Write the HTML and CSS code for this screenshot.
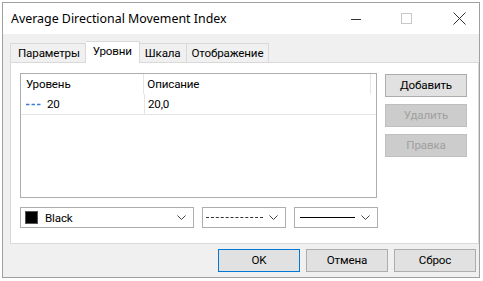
FILE: index.html
```html
<!DOCTYPE html>
<html>
<head>
<meta charset="utf-8">
<link rel="stylesheet" href="styles.css">
</head>
<body>
<div class="window">
  <div class="titlebar">
    <span class="title">Average Directional Movement Index</span>
    <div class="caption-btns">
      <svg class="cap cap-min" width="12" height="12" viewBox="0 0 12 12"><path d="M1 6.5H11" stroke="#333" stroke-width="1"/></svg>
      <svg class="cap cap-max" width="12" height="12" viewBox="0 0 12 12"><rect x="0.5" y="0.5" width="10" height="10" fill="none" stroke="#c8c8c8" stroke-width="1"/></svg>
      <svg class="cap cap-close" width="13" height="13" viewBox="0 0 13 13"><path d="M0.5 0.5L12.5 12.5M12.5 0.5L0.5 12.5" stroke="#333" stroke-width="1"/></svg>
    </div>
  </div>
  <div class="content">
    <div class="tabs">
      <div class="tab first">Параметры</div>
      <div class="tab active">Уровни</div>
      <div class="tab">Шкала</div>
      <div class="tab">Отображение</div>
    </div>
    <div class="panel">
      <div class="top-row">
        <div class="list">
          <div class="list-head">
            <div class="cell c1">Уровень</div>
            <div class="cell c2">Описание</div>
            <div class="cell c3"></div>
          </div>
          <div class="list-row">
            <div class="cell c1"><svg class="dash-ico" width="15" height="3" viewBox="0 0 15 3"><path d="M0 1.5H3.5M5.5 1.5H9M11 1.5H14.5" stroke="#3a7fd4" stroke-width="1.3"/></svg>20</div>
            <div class="cell c2">20,0</div>
          </div>
        </div>
        <div class="side-btns">
          <div class="btn">Добавить</div>
          <div class="btn disabled">Удалить</div>
          <div class="btn disabled">Правка</div>
        </div>
      </div>
      <div class="combo-row">
        <div class="combo color-combo">
          <span class="swatch"></span><span class="combo-text">Black</span>
          <svg class="chev" width="9" height="5" viewBox="0 0 9 5"><path d="M0.5 0.5L4.5 4.5L8.5 0.5" fill="none" stroke="#444" stroke-width="1"/></svg>
        </div>
        <div class="combo style-combo">
          <span class="line dashed"></span>
          <svg class="chev" width="9" height="5" viewBox="0 0 9 5"><path d="M0.5 0.5L4.5 4.5L8.5 0.5" fill="none" stroke="#444" stroke-width="1"/></svg>
        </div>
        <div class="combo style-combo">
          <span class="line solid"></span>
          <svg class="chev" width="9" height="5" viewBox="0 0 9 5"><path d="M0.5 0.5L4.5 4.5L8.5 0.5" fill="none" stroke="#444" stroke-width="1"/></svg>
        </div>
      </div>
    </div>
    <div class="bottom-btns">
      <div class="btn big default">OK</div>
      <div class="btn big">Отмена</div>
      <div class="btn big">Сброс</div>
    </div>
  </div>
</div>
</body>
</html>
```
FILE: styles.css
```css
html, body {
  margin: 0;
  padding: 0;
  background: #ffffff;
  width: 483px;
  height: 281px;
  overflow: hidden;
}
body {
  font-family: Roboto, "Noto Sans", sans-serif;
  font-size: 11.6px;
  letter-spacing: -0.15px;
  color: #000;
}
.window {
  margin: 2px 0 0 2px;
  width: 478px;
  height: 276px;
  border: 1px solid #a0a0a0;
  background: #f0f0f0;
  display: flex;
  flex-direction: column;
  box-sizing: border-box;
}
.titlebar {
  height: 31px;
  background: #fff;
  display: flex;
  align-items: center;
  padding-left: 8px;
  flex: none;
}
.title {
  font-family: "Noto Sans", sans-serif;
  font-size: 12.4px;
  letter-spacing: 0;
  color: #000;
  flex: 1;
}
.caption-btns {
  display: flex;
  align-items: center;
  height: 100%;
}
.cap { display: block; }
.cap-min { margin-right: 39px; }
.cap-max { margin-right: 40px; }
.cap-close { margin-right: 13px; }
.content {
  padding: 7px 0 0 7px;
  display: flex;
  flex-direction: column;
  flex: 1;
}
.tabs {
  display: flex;
  align-items: flex-end;
  height: 21px;
  position: relative;
  z-index: 1;
}
.tab {
  height: 19px;
  box-sizing: border-box;
  border: 1px solid #d9d9d9;
  border-bottom: none;
  border-left: none;
  background: #f0f0f0;
  padding: 0 5px;
  line-height: 18px;
}
.tab.first { border-left: 1px solid #d9d9d9; padding-left: 7px; }
.tab.active {
  height: 22px;
  margin-bottom: -1px;
  background: #fff;
  line-height: 19px;
  padding: 0 7px;
}
.panel {
  width: 469px;
  height: 182px;
  box-sizing: border-box;
  border: 1px solid #d9d9d9;
  background: #fff;
  padding: 10px 0 0 9px;
  display: flex;
  flex-direction: column;
}
.top-row {
  display: flex;
  gap: 8px;
}
.list {
  width: 357px;
  height: 125px;
  box-sizing: border-box;
  border: 1px solid #adadad;
  background: #fff;
}
.list-head, .list-row {
  display: flex;
  height: 20px;
}
.list-row {
  border-bottom: 1px solid #e5e5e5;
}
.cell {
  line-height: 19px;
  padding-left: 5px;
  box-sizing: border-box;
  display: flex;
  align-items: center;
}
.c1 { width: 124px; border-right: 1px solid #e5e5e5; }
.c2 { width: 228px; padding-left: 3px; }
.list-head .c2 { border-right: 1px solid #e5e5e5; }
.c3 { flex: 1; }
.dash-ico { margin-right: 6px; }
.side-btns {
  display: flex;
  flex-direction: column;
  gap: 7px;
  padding-top: 1px;
}
.btn {
  width: 82px;
  height: 23px;
  box-sizing: border-box;
  border: 1px solid #adadad;
  background: #e1e1e1;
  text-align: center;
  line-height: 20px;
}
.btn.disabled {
  background: #cccccc;
  border-color: #bfbfbf;
  color: #a0a0a0;
}
.combo-row {
  display: flex;
  gap: 8px;
  margin-top: 9px;
}
.combo {
  height: 21px;
  box-sizing: border-box;
  border: 1px solid #adadad;
  background: #fff;
  display: flex;
  align-items: center;
}
.color-combo { width: 174px; padding-left: 4px; }
.style-combo { width: 84px; padding-left: 3px; }
.swatch {
  width: 13px;
  height: 13px;
  box-sizing: border-box;
  background: #000;
  border: 1px solid #555;
  margin-right: 7px;
}
.combo-text { flex: 1; }
.line { width: 57px; height: 0; margin-right: auto; }
.line.dashed { border-top: 1px dashed #333; }
.line.solid { border-top: 1px solid #000; width: 55px; margin-left: 2px; }
.chev { margin-right: 7px; display: block; }
.bottom-btns {
  display: flex;
  gap: 6px;
  margin-top: 5px;
  margin-left: 208px;
}
.btn.big {
  height: 23px;
  width: 82px;
  line-height: 21px;
}
.btn.default {
  border: 1px solid #0078d7;
}
```
